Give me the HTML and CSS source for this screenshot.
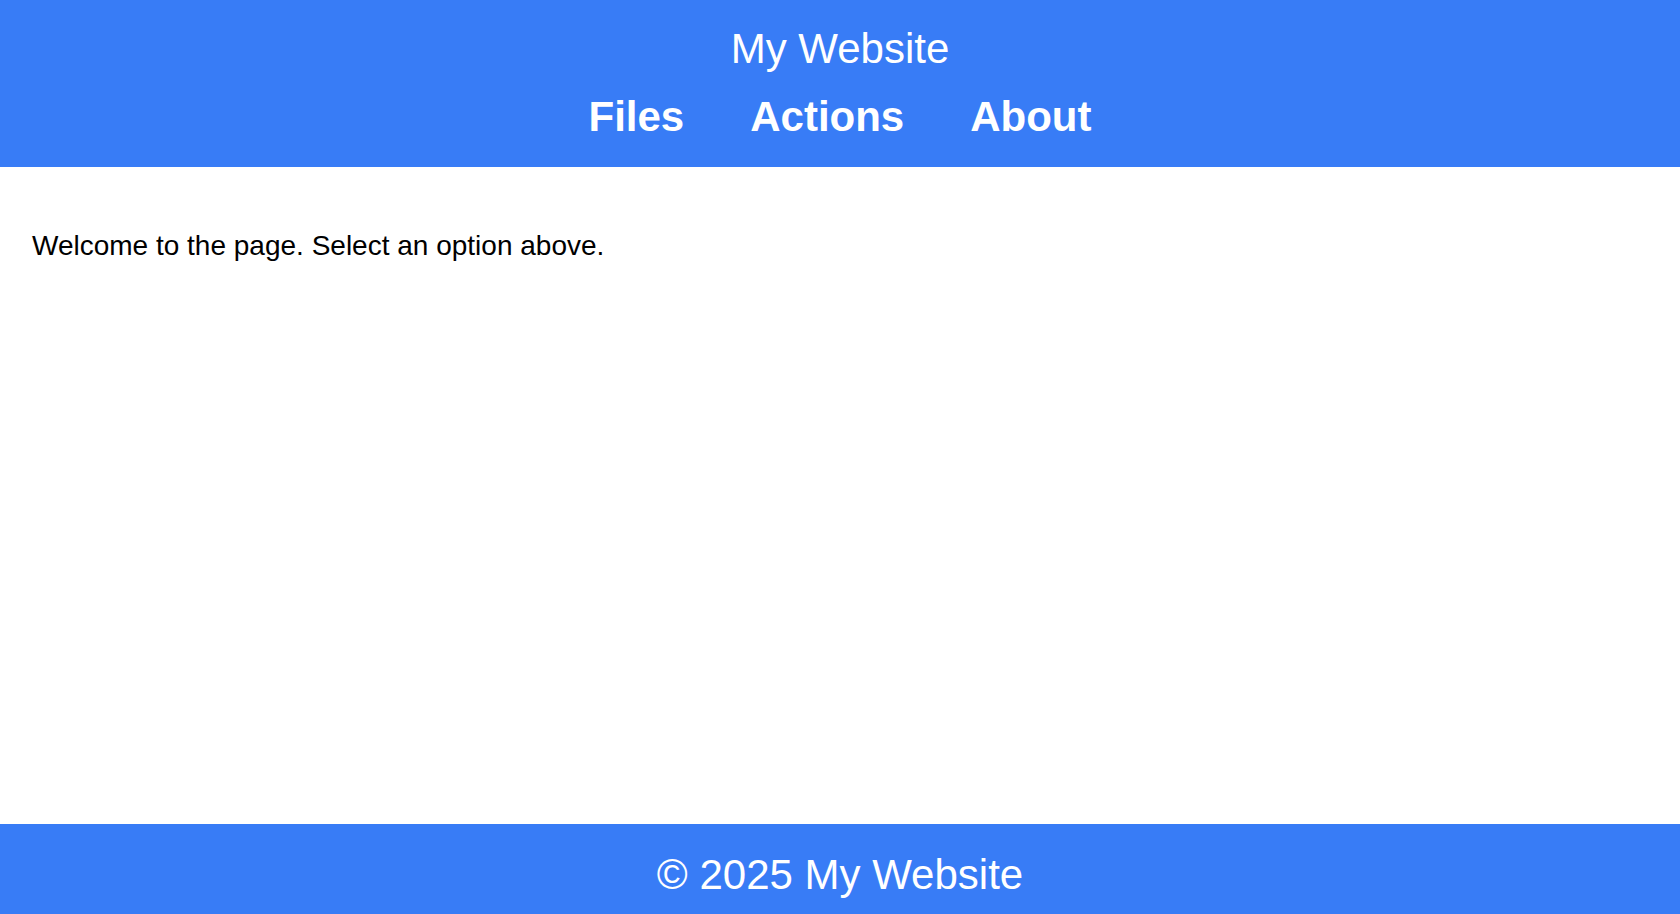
FILE: index.html
```html
<!DOCTYPE html>
<html lang="en">
<head>
    <meta charset="UTF-8">
    <meta name="viewport" content="width=device-width, initial-scale=1.0">
    <title>My Website</title>
    <link rel="stylesheet" href="styles.css">
</head>
<body>
    <header class="site-header">
        <div class="site-title">My Website</div>
        <nav class="site-nav">
            <a href="#">Files</a>
            <a href="#">Actions</a>
            <a href="#">About</a>
        </nav>
    </header>

    <main class="content">
        <p>Welcome to the page. Select an option above.</p>
    </main>

    <footer class="site-footer">
        &copy; 2025 My Website
    </footer>
</body>
</html>
```

FILE: styles.css
```css
body {
    font-family: "Liberation Sans", Arial, sans-serif;
    margin: 0;
    min-height: 100vh;
    display: flex;
    flex-direction: column;
}
.site-header {
    background-color: #387cf6;
    color: white;
    text-align: center;
    padding: 25px 0 26px;
}
.site-title {
    font-size: 42px;
    margin-bottom: 20px;
}
.site-nav {
    display: flex;
    justify-content: center;
    gap: 66px;
}
.site-nav a {
    color: white;
    text-decoration: none;
    font-size: 42px;
    font-weight: bold;
}
.content {
    flex: 1;
    padding: 35px 32px;
}
.content p {
    font-size: 28px;
    margin: 28px 0;
}
.site-footer {
    background-color: #387cf6;
    color: white;
    text-align: center;
    font-size: 42px;
    padding: 27px 0 15px;
}
```
